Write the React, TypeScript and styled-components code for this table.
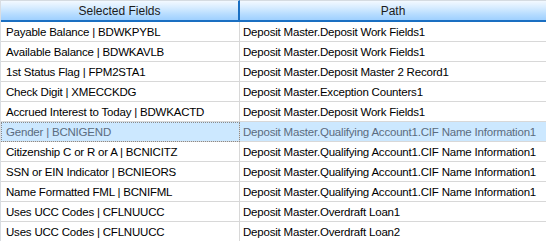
import React from "react";
import styled, { createGlobalStyle } from "styled-components";

const GlobalStyle = createGlobalStyle`
  html, body { margin: 0; padding: 0; background: #ffffff; }
  body { font-family: "Liberation Sans", Arial, sans-serif; }
`;

const Grid = styled.div`
  display: grid;
  grid-template-columns: 239px 1fr;
  width: 546px;
  height: 241px;
  overflow: hidden;
  background: #ffffff;
  border-left: 1px solid #d9dde2;
  box-sizing: border-box;
  font-size: 11.5px;
  letter-spacing: -0.2px;
  color: #000000;
`;

const HeaderCell = styled.div<{ $last?: boolean }>`
  height: 22px;
  box-sizing: border-box;
  display: flex;
  align-items: center;
  justify-content: center;
  border-top: 1px solid #d5dbe1;
  border-bottom: 2px solid #1a6fc2;
  border-right: ${(p) => (p.$last ? "none" : "2px solid #1a6fc2")};
  background: linear-gradient(#f3f9ff 0%, #d7ecff 35%, #b6dcff 70%, #9fd0ff 100%);
  color: #1b1b1b;
  font-size: 12px;
  letter-spacing: 0;
`;

const Cell = styled.div<{ $selected?: boolean; $focus?: boolean; $first?: boolean }>`
  height: 20px;
  box-sizing: border-box;
  display: flex;
  align-items: center;
  padding-left: ${(p) => (p.$first ? "5px" : "3px")};
  white-space: nowrap;
  overflow: hidden;
  border-bottom: 1px solid #d8d8d8;
  border-right: ${(p) => (p.$first ? "1px solid #d8d8d8" : "none")};
  background: ${(p) => (p.$selected ? "#cce8ff" : "#ffffff")};
  color: ${(p) => (p.$selected ? "#5b6c80" : "#000000")};
  ${(p) =>
    p.$focus
      ? `outline: 1px dotted #8a8a8a; outline-offset: -1px;`
      : ""}
`;

type Row = { field: string; path: string };

const rows: Row[] = [
  { field: "Payable Balance | BDWKPYBL", path: "Deposit Master.Deposit Work Fields1" },
  { field: "Available Balance | BDWKAVLB", path: "Deposit Master.Deposit Work Fields1" },
  { field: "1st Status Flag | FPM2STA1", path: "Deposit Master.Deposit Master 2 Record1" },
  { field: "Check Digit | XMECCKDG", path: "Deposit Master.Exception Counters1" },
  { field: "Accrued Interest to Today | BDWKACTD", path: "Deposit Master.Deposit Work Fields1" },
  { field: "Gender | BCNIGEND", path: "Deposit Master.Qualifying Account1.CIF Name Information1" },
  { field: "Citizenship C or R or A | BCNICITZ", path: "Deposit Master.Qualifying Account1.CIF Name Information1" },
  { field: "SSN or EIN Indicator | BCNIEORS", path: "Deposit Master.Qualifying Account1.CIF Name Information1" },
  { field: "Name Formatted FML | BCNIFML", path: "Deposit Master.Qualifying Account1.CIF Name Information1" },
  { field: "Uses UCC Codes | CFLNUUCC", path: "Deposit Master.Overdraft Loan1" },
  { field: "Uses UCC Codes | CFLNUUCC", path: "Deposit Master.Overdraft Loan2" },
];

const SELECTED = 5;

export default function App() {
  return (
    <>
      <GlobalStyle />
      <Grid>
        <HeaderCell>Selected Fields</HeaderCell>
        <HeaderCell $last>Path</HeaderCell>
        {rows.map((r, i) => (
          <React.Fragment key={i}>
            <Cell $first $selected={i === SELECTED} $focus={i === SELECTED}>
              {r.field}
            </Cell>
            <Cell $selected={i === SELECTED}>{r.path}</Cell>
          </React.Fragment>
        ))}
      </Grid>
    </>
  );
}
